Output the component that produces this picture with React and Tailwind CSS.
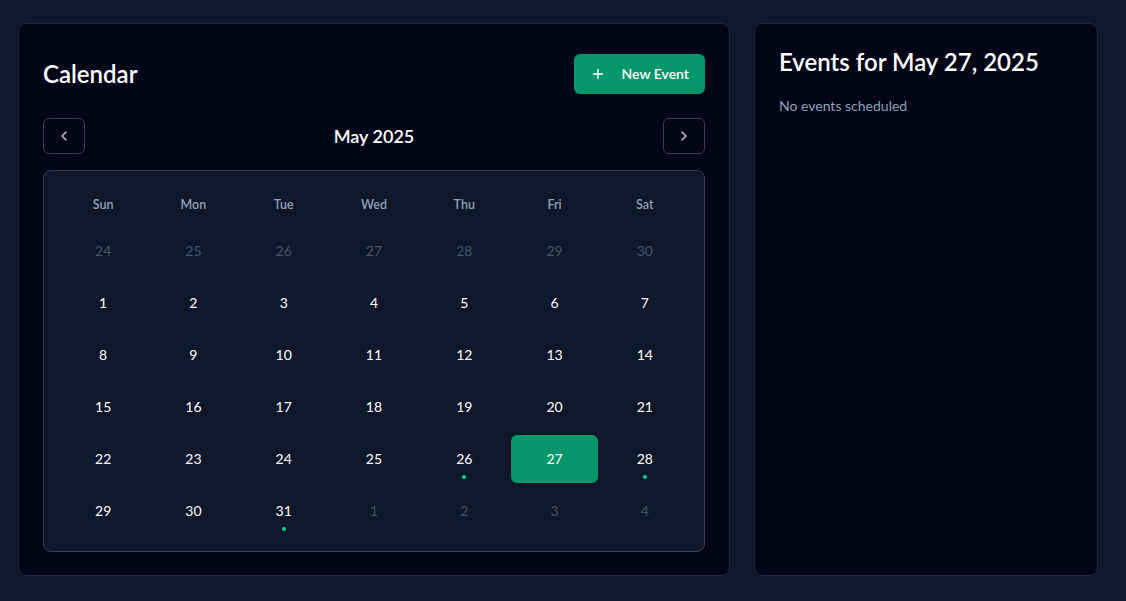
import React, { useState } from 'react'
import { ChevronLeft, ChevronRight, Plus } from 'lucide-react'

const DAYS = ['Sun', 'Mon', 'Tue', 'Wed', 'Thu', 'Fri', 'Sat']
const EVENT_DAYS = [26, 28, 31]

const buildCells = () => {
  const cells = []
  for (let d = 24; d <= 30; d++) cells.push({ day: d, current: false })
  for (let d = 1; d <= 31; d++) cells.push({ day: d, current: true })
  for (let d = 1; d <= 4; d++) cells.push({ day: d, current: false })
  return cells
}

const App = () => {
  const [selected, setSelected] = useState(27)
  const cells = buildCells()

  return (
    <div className="min-h-screen bg-[#0f172a] pl-[18px] pt-[23px] pb-[25px] font-['Lato',sans-serif]">
      <div className="grid grid-cols-[712px_344px] gap-6">
        {/* calendar panel */}
        <div className="h-[553px] bg-[#020617] border border-[#1e293b] rounded-lg p-6">
          <div className="flex items-center justify-between pt-[6px] mb-6">
            <h2 className="text-2xl font-semibold text-white">Calendar</h2>
            <button className="h-10 px-4 flex items-center gap-4 bg-[#059669] rounded-md text-white text-sm font-semibold">
              <Plus className="w-4 h-4" strokeWidth={2} />
              New Event
            </button>
          </div>

          <div className="flex items-center justify-between mb-4">
            <button className="w-[42px] h-9 flex items-center justify-center border border-[#334155] rounded-md text-slate-300">
              <ChevronLeft className="w-4 h-4" />
            </button>
            <span className="text-lg font-semibold text-white">May 2025</span>
            <button className="w-[42px] h-9 flex items-center justify-center border border-[#334155] rounded-md text-slate-300">
              <ChevronRight className="w-4 h-4" />
            </button>
          </div>

          <div className="bg-[#0f172a] border border-[#334155] rounded-lg p-4">
            <div className="grid grid-cols-7 gap-1">
              {DAYS.map((d) => (
                <div key={d} className="h-9 flex items-center justify-center text-[12.5px] font-semibold text-slate-400">
                  {d}
                </div>
              ))}
              {cells.map((c, i) => {
                const isSel = c.current && c.day === selected
                const hasEvent = c.current && EVENT_DAYS.includes(c.day)
                return (
                  <div
                    key={i}
                    onClick={() => c.current && setSelected(c.day)}
                    className={`relative h-12 flex items-center justify-center rounded-md text-sm cursor-pointer ${
                      isSel ? 'bg-[#059669] text-white' : c.current ? 'text-white' : 'text-slate-600'
                    }`}
                  >
                    {c.day}
                    {hasEvent && !isSel && (
                      <span className="absolute bottom-1 w-1 h-1 rounded-full bg-emerald-400" />
                    )}
                  </div>
                )
              })}
            </div>
          </div>
        </div>

        {/* events panel */}
        <div className="h-[553px] bg-[#020617] border border-[#1e293b] rounded-lg p-6">
          <h2 className="text-2xl font-semibold text-white mb-[18px] -mt-[2px]">Events for May 27, 2025</h2>
          <p className="text-sm text-slate-400">No events scheduled</p>
        </div>
      </div>
    </div>
  )
}

export default App
